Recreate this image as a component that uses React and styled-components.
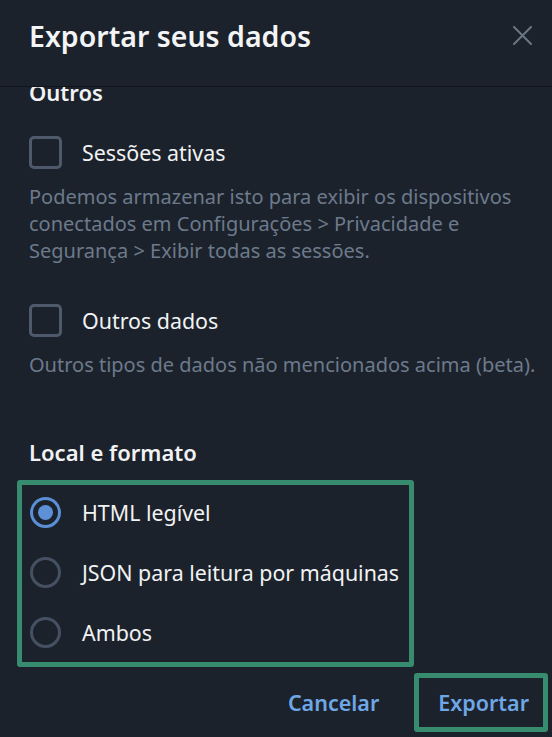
import React, { useLayoutEffect, useRef, useState } from "react";
import styled, { createGlobalStyle } from "styled-components";

const Global = createGlobalStyle`
  html, body { margin: 0; padding: 0; background: #1c222b; }
  body { font-family: "Noto Sans", "Open Sans", sans-serif; }
  * { box-sizing: border-box; }
`;

const Dialog = styled.div`
  width: 552px;
  height: 737px;
  display: flex;
  flex-direction: column;
  background: #1c222b;
  color: #f1f2f4;
  overflow: hidden;
`;

const Header = styled.div`
  height: 87px;
  flex: none;
  display: flex;
  align-items: flex-start;
  justify-content: space-between;
  padding: 17px 12px 0 29px;
  border-bottom: 1px solid #10151b;
`;

const Title = styled.h1`
  margin: 0;
  font-size: 28.5px;
  font-weight: 600;
  line-height: 38px;
  color: #f3f4f6;
`;

const CloseButton = styled.button`
  width: 36px;
  height: 36px;
  border: 0;
  padding: 0;
  background: transparent;
  display: flex;
  align-items: center;
  justify-content: center;
  cursor: pointer;
`;

const Scroll = styled.div`
  flex: 1;
  overflow-y: auto;
  scrollbar-width: none;
  &::-webkit-scrollbar { display: none; }
`;

const Content = styled.div`
  padding: 20px 14px 40px 29px;
  display: flex;
  flex-direction: column;
`;

const SectionTitle = styled.h2`
  margin: ${(p) => p.$top || 0}px 0 0;
  font-size: 22px;
  font-weight: 600;
  line-height: 30px;
  color: #f1f2f4;
`;

const CheckRow = styled.label`
  display: flex;
  align-items: center;
  gap: 20px;
  margin-top: ${(p) => p.$top}px;
  font-size: 21.4px;
  line-height: 27px;
  color: #f1f2f4;
`;

const CheckBox = styled.span`
  width: 33px;
  height: 33px;
  flex: none;
  border: 3px solid #4e5a6b;
  border-radius: 5px;
`;

const Hint = styled.p`
  margin: ${(p) => p.$top}px 0 0;
  font-size: 20px;
  line-height: 27px;
  color: #6c7a8c;
`;

const RadioGroup = styled.div`
  width: 397px;
  margin: 13px 0 0 -12px;
  border: 5px solid #378b6e;
  border-radius: 3px;
  padding: 12px 8px 14px 8px;
  display: flex;
  flex-direction: column;
  gap: 29px;
`;

const RadioRow = styled.label`
  display: flex;
  align-items: center;
  gap: 21px;
  height: 31px;
  font-size: 21.4px;
  line-height: 27px;
  color: #f1f2f4;
  white-space: nowrap;
`;

const RadioCircle = styled.span`
  width: 31px;
  height: 31px;
  flex: none;
  border-radius: 50%;
  border: 3px solid ${(p) => (p.$on ? "#5a8fd6" : "#455163")};
  display: flex;
  align-items: center;
  justify-content: center;
  &::after {
    content: "";
    width: 15px;
    height: 15px;
    border-radius: 50%;
    background: #5d90d7;
    display: ${(p) => (p.$on ? "block" : "none")};
  }
`;

const Footer = styled.div`
  flex: none;
  height: 64px;
  display: flex;
  justify-content: flex-end;
  align-items: flex-start;
  gap: 15px;
  padding: 0 4px 0 0;
`;

const Highlight = styled.div`
  border: 5px solid ${(p) => (p.$on ? "#378b6e" : "transparent")};
  border-radius: 3px;
  height: 59px;
  display: flex;
  align-items: center;
`;

const TextButton = styled.button`
  border: 0;
  background: transparent;
  font-family: inherit;
  font-size: 21.5px;
  font-weight: 600;
  color: #6fa7e6;
  height: 49px;
  padding: ${(p) => p.$pad};
  cursor: pointer;
`;

const options = ["HTML legível", "JSON para leitura por máquinas", "Ambos"];

export default function App() {
  const scrollRef = useRef(null);
  const [format, setFormat] = useState(0);

  useLayoutEffect(() => {
    if (scrollRef.current) scrollRef.current.scrollTop = 30;
  }, []);

  return (
    <>
      <Global />
      <Dialog>
        <Header>
          <Title>Exportar seus dados</Title>
          <CloseButton aria-label="Fechar">
            <svg width="19" height="19" viewBox="0 0 19 19">
              <path
                d="M1 1 L18 18 M18 1 L1 18"
                stroke="#6b7684"
                strokeWidth="2"
                strokeLinecap="round"
              />
            </svg>
          </CloseButton>
        </Header>
        <Scroll ref={scrollRef}>
          <Content>
            <SectionTitle>Outros</SectionTitle>
            <CheckRow $top={29}>
              <CheckBox />
              Sessões ativas
            </CheckRow>
            <Hint $top={14}>
              Podemos armazenar isto para exibir os dispositivos conectados em
              Configurações &gt; Privacidade e Segurança &gt; Exibir todas as
              sessões.
            </Hint>
            <CheckRow $top={40}>
              <CheckBox />
              Outros dados
            </CheckRow>
            <Hint $top={14}>
              Outros tipos de dados não mencionados acima (beta).
            </Hint>
            <SectionTitle $top={59}>Local e formato</SectionTitle>
            <RadioGroup>
              {options.map((o, i) => (
                <RadioRow key={o} onClick={() => setFormat(i)}>
                  <RadioCircle $on={format === i} />
                  {o}
                </RadioRow>
              ))}
            </RadioGroup>
          </Content>
        </Scroll>
        <Footer>
          <Highlight>
            <TextButton $pad="0 15px 0 20px">Cancelar</TextButton>
          </Highlight>
          <Highlight $on>
            <TextButton $pad="0 14px 0 19px">Exportar</TextButton>
          </Highlight>
        </Footer>
      </Dialog>
    </>
  );
}
